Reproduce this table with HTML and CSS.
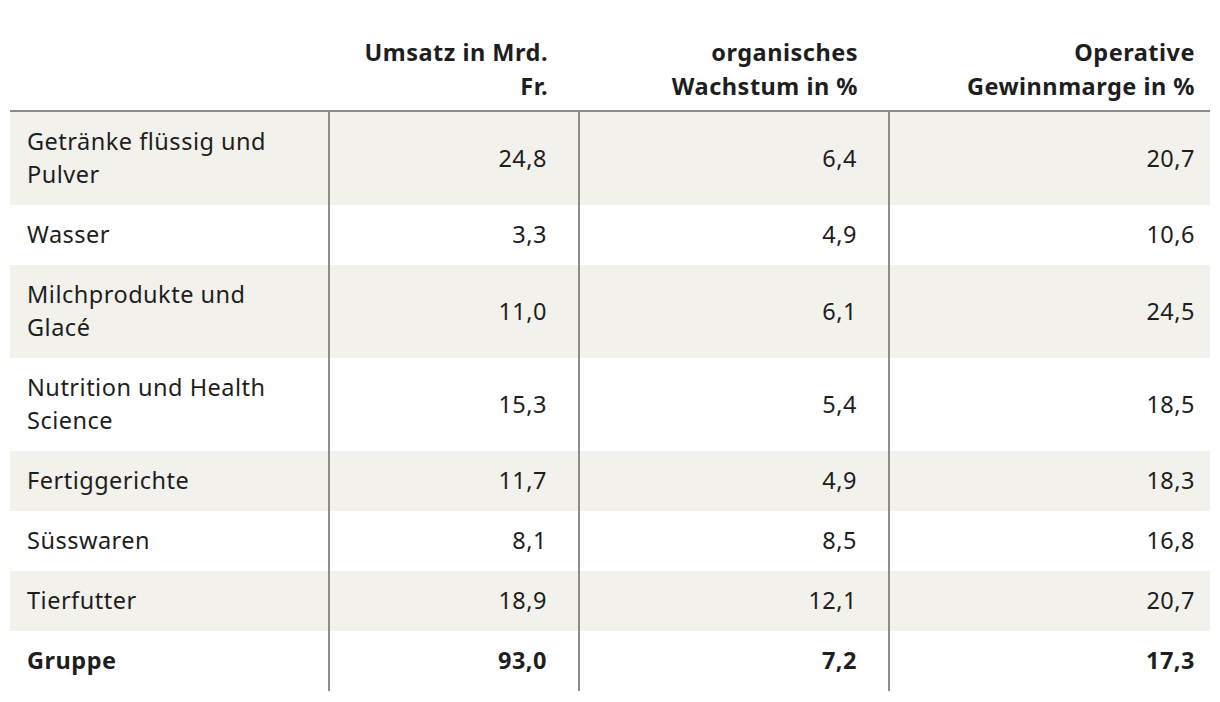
FILE: index.html
```html
<!DOCTYPE html>
<html lang="de">
<head>
<meta charset="utf-8">
<title>Nestlé Segmente</title>
<link rel="stylesheet" href="styles.css">
</head>
<body>
<div class="wrap">
<table class="data">
  <colgroup>
    <col class="c1"><col class="c2"><col class="c3"><col class="c4">
  </colgroup>
  <thead>
    <tr>
      <th class="lbl"></th>
      <th class="num">Umsatz in Mrd.<br>Fr.</th>
      <th class="num">organisches<br>Wachstum in %</th>
      <th class="num last">Operative<br>Gewinnmarge in %</th>
    </tr>
  </thead>
  <tbody>
    <tr class="alt"><td class="lbl">Getränke flüssig und<br>Pulver</td><td class="num">24,8</td><td class="num">6,4</td><td class="num last">20,7</td></tr>
    <tr><td class="lbl">Wasser</td><td class="num">3,3</td><td class="num">4,9</td><td class="num last">10,6</td></tr>
    <tr class="alt"><td class="lbl">Milchprodukte und<br>Glacé</td><td class="num">11,0</td><td class="num">6,1</td><td class="num last">24,5</td></tr>
    <tr><td class="lbl">Nutrition und Health<br>Science</td><td class="num">15,3</td><td class="num">5,4</td><td class="num last">18,5</td></tr>
    <tr class="alt"><td class="lbl">Fertiggerichte</td><td class="num">11,7</td><td class="num">4,9</td><td class="num last">18,3</td></tr>
    <tr><td class="lbl">Süsswaren</td><td class="num">8,1</td><td class="num">8,5</td><td class="num last">16,8</td></tr>
    <tr class="alt"><td class="lbl">Tierfutter</td><td class="num">18,9</td><td class="num">12,1</td><td class="num last">20,7</td></tr>
    <tr class="total"><td class="lbl">Gruppe</td><td class="num">93,0</td><td class="num">7,2</td><td class="num last">17,3</td></tr>
  </tbody>
</table>
</div>
</body>
</html>
```
FILE: styles.css
```css
html, body {
  margin: 0;
  padding: 0;
  background: #ffffff;
}
.wrap {
  padding: 10px;
}
.data {
  width: 1200px;
  border-collapse: collapse;
  table-layout: fixed;
  font-family: "Noto Sans", "Open Sans", sans-serif;
  font-size: 23.5px;
  letter-spacing: 0.5px;
  line-height: 34px;
  color: #1e1e1e;
}
.c1 { width: 319px; }
.c2 { width: 250px; }
.c3 { width: 310px; }
.c4 { width: 321px; }
.data th {
  font-weight: 700;
  vertical-align: bottom;
  padding: 25px 31px 7px 16px;
  border-bottom: 2px solid #8c8c8c;
}
.data td {
  padding: 13px 31px 14px 16px;
  line-height: 33px;
  vertical-align: middle;
}
.data .num { text-align: right; }
.data .lbl { text-align: left; padding-left: 17px; }
.data .last { padding-right: 15px; }
.data td + td {
  border-left: 2px solid #8c8c8c;
}
.data tr.alt td {
  background: #f2f1eb;
}
.data tr.total td {
  font-weight: 700;
}
```
